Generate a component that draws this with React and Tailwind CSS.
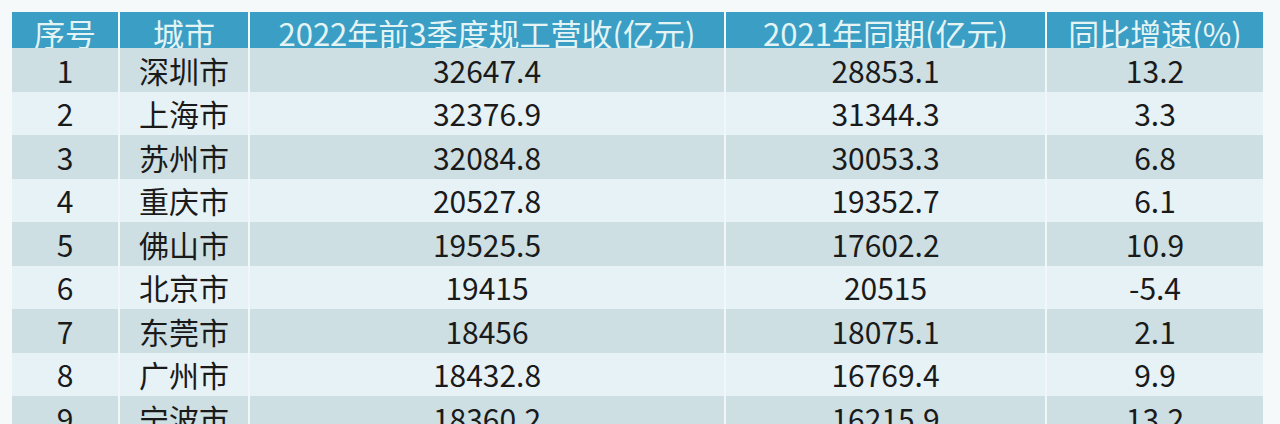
import React from "react";

const rows = [
  ["1", "深圳市", "32647.4", "28853.1", "13.2"],
  ["2", "上海市", "32376.9", "31344.3", "3.3"],
  ["3", "苏州市", "32084.8", "30053.3", "6.8"],
  ["4", "重庆市", "20527.8", "19352.7", "6.1"],
  ["5", "佛山市", "19525.5", "17602.2", "10.9"],
  ["6", "北京市", "19415", "20515", "-5.4"],
  ["7", "东莞市", "18456", "18075.1", "2.1"],
  ["8", "广州市", "18432.8", "16769.4", "9.9"],
  ["9", "宁波市", "18360.2", "16215.9", "13.2"],
];

const widths = ["w-[106px]", "w-[128px]", "w-[474px]", "w-[319px]", "w-[216px]"];

export default function App() {
  return (
    <div
      className="w-[1280px] h-[424px] overflow-hidden bg-[#f6f9fa] pl-[12px] pt-[12px]"
      style={{ fontFamily: '"Noto Sans CJK SC", "Noto Sans", sans-serif' }}
    >
      <div className="flex flex-col w-[1251px]">
        <div className="flex gap-[2px] h-[36px] bg-[#f6f9fa]">
          {["序号", "城市", "2022年前3季度规工营收(亿元)", "2021年同期(亿元)", "同比增速(%)"].map((h, i) => (
            <div
              key={i}
              className={`${widths[i]} shrink-0 bg-[#3a9ec5] text-[#e4f4f4] text-[31px] leading-none flex items-center justify-center pt-[4px] whitespace-nowrap`}
            >
              {h}
            </div>
          ))}
        </div>
        {rows.map((r, ri) => (
          <div key={ri} className="flex gap-[2px] h-[43.5px] bg-[#f1f6f8]">
            {r.map((c, ci) => (
              <div
                key={ci}
                className={`${widths[ci]} shrink-0 ${ri % 2 === 0 ? "bg-[#cddfe3]" : "bg-[#e7f2f7]"} text-[#1a1a1a] text-[30px] leading-none flex items-center justify-center`}
              >
                {c}
              </div>
            ))}
          </div>
        ))}
      </div>
    </div>
  );
}
